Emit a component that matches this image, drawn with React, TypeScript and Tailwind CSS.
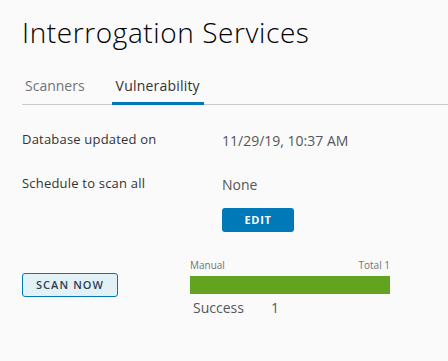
export default function App() {
  return (
    <div className="min-h-screen bg-[#fafafa] pl-[22px] pt-[12px] font-['Open_Sans',sans-serif] text-[#333]">
      {/* Title */}
      <h1 className="text-[28px] leading-[40px] font-light tracking-[0.6px] text-[#000]">Interrogation Services</h1>

      {/* Tabs */}
      <div className="mt-[24px] flex h-[29px] items-stretch border-b border-[#ccc]">
        <div className="flex items-start px-[3px] text-[14px] leading-[20px] text-[#737373]">Scanners</div>
        <div className="ml-[24px] -mb-px flex items-start border-b-[3px] border-[#0079b8] px-[4px] text-[14px] leading-[20px] tracking-[0.2px] text-[#333]">
          Vulnerability
        </div>
      </div>

      {/* Details */}
      <div className="mt-[25px] flex flex-col">
        <div className="flex h-[20px] items-center">
          <div className="w-[200px] text-[13px] tracking-[0.2px] text-[#333]">Database updated on</div>
          <div className="text-[14px] text-[#565656]">11/29/19, 10:37 AM</div>
        </div>
        <div className="mt-[24px] flex h-[20px] items-center">
          <div className="w-[200px] text-[13px] tracking-[0.2px] text-[#333]">Schedule to scan all</div>
          <div className="text-[14px] text-[#565656]">None</div>
        </div>
        <div className="mt-[12px] pl-[200px]">
          <button className="h-[24px] w-[72px] rounded-[3px] bg-[#0079b8] text-[11px] font-bold tracking-[0.06em] text-white">
            EDIT
          </button>
        </div>
      </div>

      {/* Scan */}
      <div className="mt-[27px] flex items-start">
        <button className="mt-[14px] h-[24px] w-[96px] rounded-[3px] border border-[#0079b8] bg-[#e1f1f6] text-[11px] font-semibold tracking-[0.1em] text-[#2f3e4d]">
          SCAN NOW
        </button>
        <div className="ml-[72px] w-[200px]">
          <div className="flex h-[12px] items-center justify-between text-[10px] text-[#737373]">
            <span>Manual</span>
            <span>Total 1</span>
          </div>
          <div className="mt-[5px] h-[18px] bg-[#62a420]" />
          <div className="mt-[3px] flex h-[20px] items-center pl-[3px] text-[14px] text-[#565656]">
            <span className="w-[78px]">Success</span>
            <span>1</span>
          </div>
        </div>
      </div>
    </div>
  );
}
